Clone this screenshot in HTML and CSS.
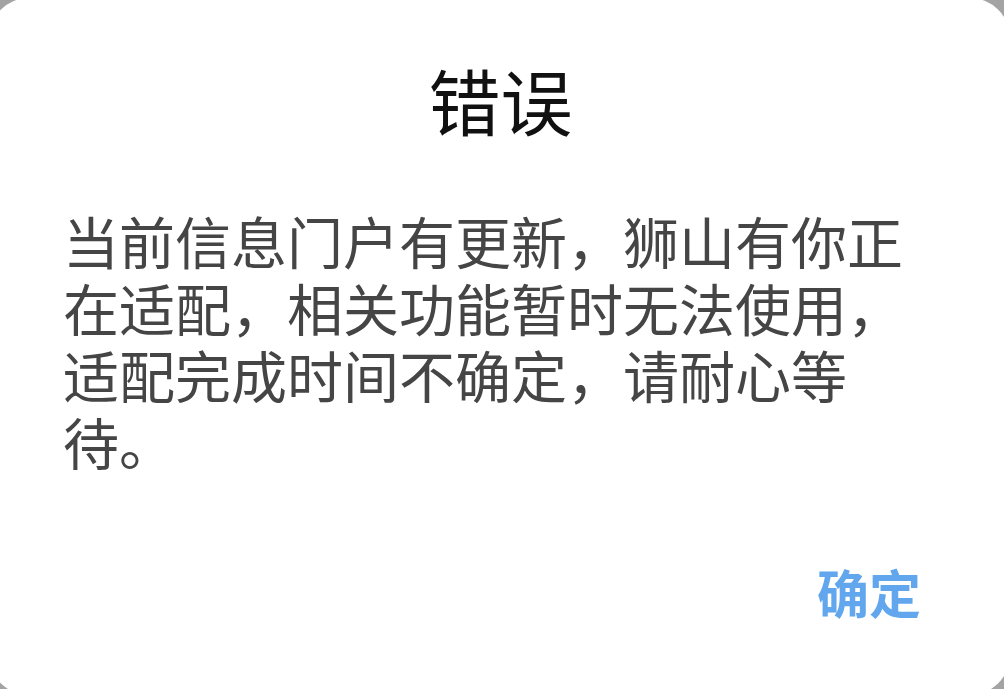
FILE: index.html
```html
<!DOCTYPE html>
<html lang="zh-CN">
<head>
<meta charset="utf-8">
<title>错误</title>
<link rel="stylesheet" href="styles.css">
</head>
<body>
<div class="dialog">
  <h1 class="title">错误</h1>
  <p class="message">当前信息门户有更新，狮山有你正<br>在适配，相关功能暂时无法使用，<br>适配完成时间不确定，请耐心等<br>待。</p>
  <div class="actions">
    <span class="btn">确定</span>
  </div>
</div>
</body>
</html>
```
FILE: styles.css
```css
html, body {
  margin: 0;
  padding: 0;
  width: 1004px;
  height: 689px;
  overflow: hidden;
  background: #a3a3a3;
}
.dialog {
  margin: -2px 0 0 -11px;
  width: 1021px;
  height: 697px;
  box-sizing: border-box;
  border-radius: 40px;
  background: #ffffff;
  padding: 65px 89px 0 74px;
  display: flex;
  flex-direction: column;
  font-family: "Noto Sans CJK SC", "Noto Sans", sans-serif;
}
.title {
  margin: 0;
  font-size: 72px;
  line-height: 72px;
  font-weight: 400;
  color: #111111;
  text-align: center;
  padding-left: 17px;
}
.message {
  margin: 71px 0 0 0;
  font-size: 56px;
  line-height: 67px;
  font-weight: 400;
  color: #454545;
  white-space: nowrap;
}
.actions {
  margin-top: 92px;
  display: flex;
  justify-content: flex-end;
}
.btn {
  font-size: 52px;
  line-height: 52px;
  font-weight: 700;
  color: #62a7ee;
}
```
